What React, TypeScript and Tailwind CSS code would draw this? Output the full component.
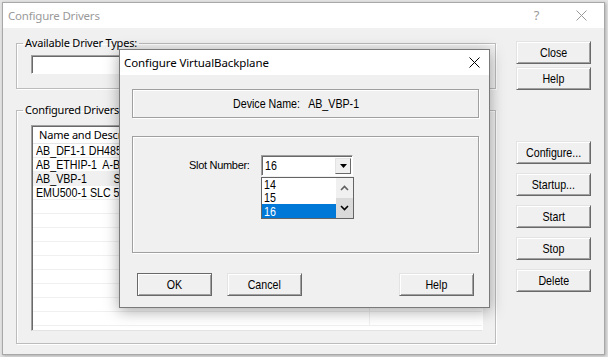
import React from "react";

const sans = "font-['Liberation_Sans',Arial,sans-serif]";
const ui = "font-['Noto_Sans','Open_Sans',sans-serif]";

function N({ children, className = "", center = false }: { children: React.ReactNode; className?: string; center?: boolean }) {
  return (
    <span
      className={`block w-max whitespace-pre ${center ? "origin-center" : "origin-left"} scale-x-[0.82] text-[13px] leading-[13px] ${sans} ${className}`}
    >
      {children}
    </span>
  );
}

function Btn({ children, def = false, className = "" }: { children: React.ReactNode; def?: boolean; className?: string }) {
  return (
    <div
      className={`h-[23px] w-[75px] shrink-0 flex items-center justify-center bg-[#f0f0f0] border ${
        def
          ? "border-[#696969] shadow-[inset_1px_1px_0_#fff,inset_-1px_-1px_0_#a0a0a0]"
          : "border-t-[#e3e3e3] border-l-[#e3e3e3] border-r-[#696969] border-b-[#696969] shadow-[inset_1px_1px_0_#fff,inset_-1px_-1px_0_#a0a0a0]"
      } text-black ${className}`}
    >
      <N center>{children}</N>
    </div>
  );
}

const rows = [
  { t: "AB_DF1-1 DH485", sel: false },
  { t: "AB_ETHIP-1  A-B", sel: false },
  { t: "AB_VBP-1         SoftLogix", sel: true },
  { t: "EMU500-1 SLC 500", sel: false },
];

export default function App() {
  const empties = Array.from({ length: 9 });
  return (
    <div className="relative w-[608px] h-[357px] overflow-hidden bg-[#e4e4e4]">
      {/* main window */}
      <div className="ml-[2px] mt-[2px] w-[603px] h-[353px] border border-[#a8a8a8] bg-[#f0f0f0] flex flex-col shadow-[1px_1px_3px_rgba(0,0,0,0.25)]">
        <div className="h-[25px] shrink-0 bg-white flex items-center">
          <span className={`pl-[5px] text-[11.5px] tracking-[-0.2px] text-[#9a9a9a] ${ui}`}>Configure Drivers</span>
          <div className={`ml-auto w-[46px] h-full flex items-center justify-center pl-[3px] text-[13px] text-[#9a9a9a] ${ui}`}>?</div>
          <div className="w-[46px] h-full flex items-center justify-center">
            <svg width="11" height="11" viewBox="0 0 11 11">
              <path d="M0.5 0.5 L10.5 10.5 M10.5 0.5 L0.5 10.5" stroke="#9a9a9a" strokeWidth="1" fill="none" />
            </svg>
          </div>
        </div>
        <div className="flex pl-[13px]">
          {/* left column */}
          <div className="w-[480px] flex flex-col">
            <fieldset className="mt-[8px] h-[53px] border border-[#bcbcbc] shadow-[inset_1px_1px_0_#fff,1px_1px_0_#fff]">
              <legend className={`ml-[6px] px-[2px] text-[11px] tracking-[-0.2px] leading-[14px] text-black ${ui}`}>Available Driver Types:</legend>
              <div className="ml-[14px] mt-[5px] h-[19px] w-[450px] bg-white border border-t-[#a0a0a0] border-l-[#a0a0a0] border-r-white border-b-white shadow-[inset_1px_1px_0_#696969]" />
            </fieldset>
            <fieldset className="mt-[14px] h-[241px] border border-[#bcbcbc] shadow-[inset_1px_1px_0_#fff,1px_1px_0_#fff]">
              <legend className={`ml-[6px] px-[2px] text-[11px] tracking-[-0.2px] leading-[14px] text-black ${ui}`}>Configured Drivers:</legend>
              <div className="ml-[14px] mt-[8px] h-[206px] w-[452px] bg-white border border-t-[#a0a0a0] border-l-[#a0a0a0] border-r-white border-b-[#e3e3e3] shadow-[inset_1px_1px_0_#696969] pl-[1px] pt-[1px] overflow-hidden">
                <div className="flex h-[17px] border-b border-[#e5e5e5]">
                  <div className={`w-[337px] border-r border-[#e5e5e5] pl-[6px] text-[11px] tracking-[-0.2px] leading-[16px] ${ui}`}>Name and Description</div>
                  <div className={`pl-[6px] text-[11px] tracking-[-0.2px] leading-[16px] ${ui}`}>Status</div>
                </div>
                {rows.map((r, i) => (
                  <div key={i} className={`flex h-[14px] border-b border-[#f0f0f0] ${r.sel ? "bg-[#f0f0f0]" : ""}`}>
                    <div className="w-[337px] shrink-0 border-r border-[#f0f0f0] pl-[3px] flex items-center text-black">
                      <N>{r.t}</N>
                    </div>
                  </div>
                ))}
                {empties.map((_, i) => (
                  <div key={i} className="flex h-[14px] border-b border-[#f0f0f0]">
                    <div className="w-[337px] border-r border-[#f0f0f0]" />
                  </div>
                ))}
              </div>
            </fieldset>
          </div>
          {/* right column */}
          <div className="ml-[20px] flex flex-col">
            <Btn className="mt-[13px]">Close</Btn>
            <Btn className="mt-[3px]">Help</Btn>
            <Btn className="mt-[51px]">Configure...</Btn>
            <Btn className="mt-[9px]">Startup...</Btn>
            <Btn className="mt-[9px]">Start</Btn>
            <Btn className="mt-[9px]">Stop</Btn>
            <Btn className="mt-[9px]">Delete</Btn>
          </div>
        </div>
      </div>

      {/* dialog */}
      <div className="absolute left-[119px] top-[49px] w-[371px] h-[259px] border border-[#7a7a7a] bg-[#f0f0f0] flex flex-col shadow-[0_3px_14px_rgba(0,0,0,0.35)]">
        <div className="h-[25px] shrink-0 bg-white flex items-center">
          <span className={`pl-[4px] text-[11.5px] tracking-[-0.1px] text-black ${ui}`}>Configure VirtualBackplane</span>
          <div className="ml-auto w-[30px] h-full flex items-center justify-center">
            <svg width="11" height="11" viewBox="0 0 11 11">
              <path d="M0.5 0.5 L10.5 10.5 M10.5 0.5 L0.5 10.5" stroke="#000" strokeWidth="1" fill="none" />
            </svg>
          </div>
        </div>
        <div className="pl-[12px] flex flex-col">
          <div className="mt-[14px] w-[347px] h-[29px] border border-[#a0a0a0] shadow-[inset_1px_1px_0_#fff,1px_1px_0_#fff] flex items-center pl-[100px]">
            <div className={`flex whitespace-pre origin-left scale-x-[0.82] text-[13px] leading-[13px] ${sans}`}>
              <span>Device Name:</span>
              <span className="ml-[10px]">AB_VBP-1</span>
            </div>
          </div>
          <div className="mt-[18px] w-[347px] h-[117px] border border-[#a0a0a0] shadow-[inset_1px_1px_0_#fff,1px_1px_0_#fff] flex items-start pt-[18px] pl-[56px]">
            <div className="h-[21px] w-[72px] shrink-0 flex items-center">
              <span className={`whitespace-pre text-[11px] leading-[13px] tracking-[-0.3px] ${sans}`}>Slot Number:</span>
            </div>
            <div className="relative">
              <div className="w-[92px] h-[21px] bg-white border border-t-[#a0a0a0] border-l-[#a0a0a0] border-r-white border-b-white shadow-[inset_1px_1px_0_#696969] flex items-center pl-[3px] pr-[1px]">
                <N>16</N>
                <div className="ml-auto mt-[1px] w-[16px] h-[16px] bg-[#f0f0f0] border border-t-[#e3e3e3] border-l-[#e3e3e3] border-r-[#696969] border-b-[#696969] flex items-center justify-center">
                  <svg width="7" height="4" viewBox="0 0 7 4">
                    <path d="M0 0 H7 L3.5 4 Z" fill="#000" />
                  </svg>
                </div>
              </div>
              {/* dropdown list */}
              <div className="absolute left-0 top-[22px] w-[93px] h-[42px] bg-white border border-[#646464] flex">
                <div className="flex-1 flex flex-col">
                  <div className="h-[13px] pl-[2px] flex items-center"><N className="leading-[12px]">14</N></div>
                  <div className="h-[13px] pl-[2px] flex items-center"><N className="leading-[12px]">15</N></div>
                  <div className="h-[14px] pl-[2px] flex items-center text-white bg-[#0078d7]"><N className="leading-[12px]">16</N></div>
                </div>
                <div className="w-[17px] flex flex-col bg-[#f0f0f0]">
                  <div className="h-[20px] flex items-center justify-center">
                    <svg width="9" height="6" viewBox="0 0 9 6">
                      <path d="M1 5 L4.5 1.5 L8 5" stroke="#606060" strokeWidth="1.6" fill="none" />
                    </svg>
                  </div>
                  <div className="flex-1 bg-[#dadada] flex items-center justify-center">
                    <svg width="9" height="6" viewBox="0 0 9 6">
                      <path d="M1 1 L4.5 4.5 L8 1" stroke="#000" strokeWidth="1.6" fill="none" />
                    </svg>
                  </div>
                </div>
              </div>
            </div>
          </div>
          <div className="mt-[20px] flex pl-[5px] pr-[15px]">
            <Btn def>OK</Btn>
            <Btn className="ml-[15px]">Cancel</Btn>
            <Btn className="ml-auto">Help</Btn>
          </div>
        </div>
      </div>
    </div>
  );
}
